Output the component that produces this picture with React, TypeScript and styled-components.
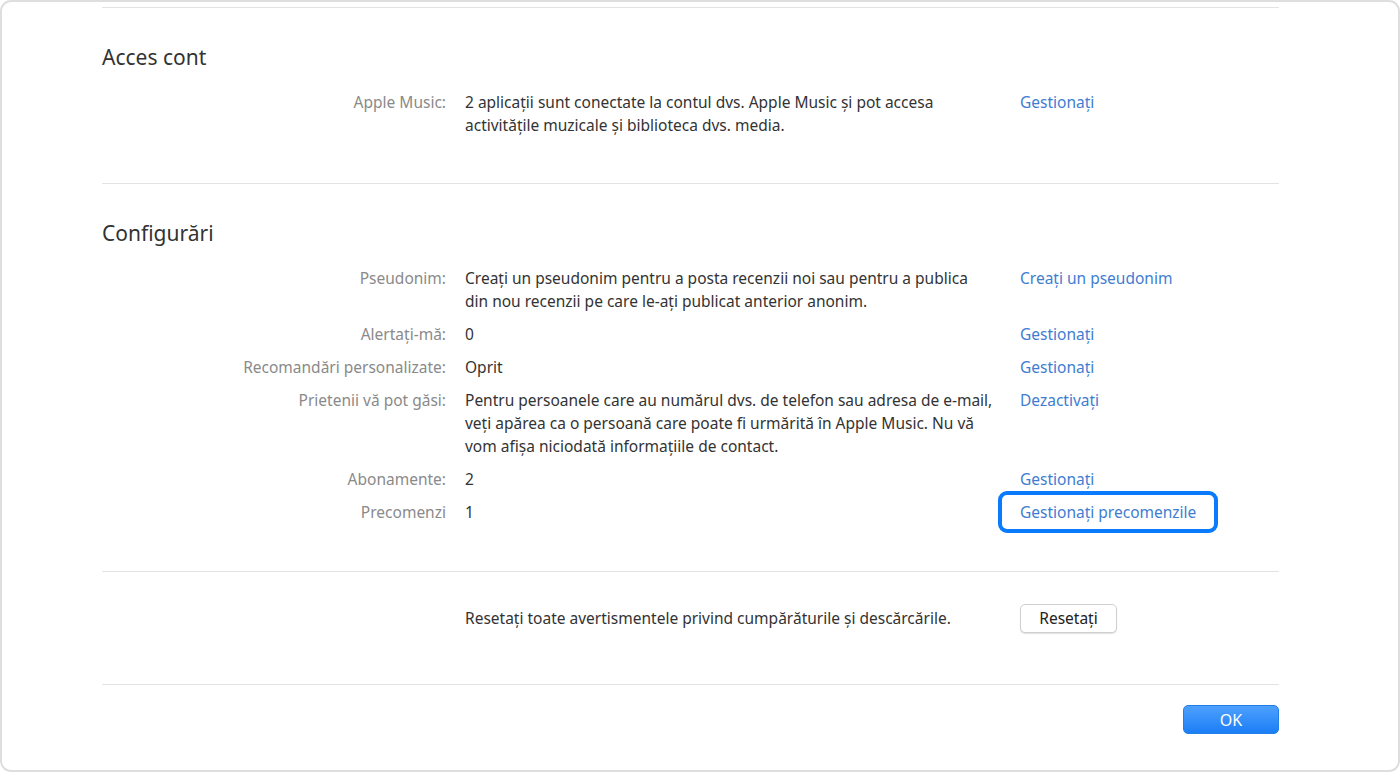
import React from "react";
import styled, { createGlobalStyle } from "styled-components";

const GlobalStyle = createGlobalStyle`
  html, body { margin: 0; padding: 0; background: #ffffff; }
  body { font-family: "Noto Sans", "Open Sans", sans-serif; -webkit-font-smoothing: antialiased; }
  * { box-sizing: border-box; }
`;

const Frame = styled.div`
  width: 1400px;
  height: 772px;
  border: 2px solid #dedede;
  border-radius: 11px;
  background: #fff;
  padding: 5px 119px 0 100px;
  overflow: hidden;
`;

const Section = styled.section<{ $pt: number; $pb: number }>`
  border-top: 1px solid #e3e3e3;
  padding-top: ${(p) => p.$pt}px;
  padding-bottom: ${(p) => p.$pb}px;
`;

const Heading = styled.h2`
  margin: 0 0 19px 0;
  font-size: 21px;
  line-height: 28px;
  font-weight: 400;
  color: #333;
`;

const Rows = styled.div`
  display: flex;
  flex-direction: column;
  gap: 10px;
  padding-top: 1px;
`;

const Row = styled.div`
  display: grid;
  grid-template-columns: 344px 536px auto;
  column-gap: 19px;
  font-size: 15.5px;
  line-height: 23px;
`;

const Label = styled.div`
  text-align: right;
  color: #8a8a8a;
  white-space: nowrap;
`;

const Value = styled.div`
  color: #333;
  max-width: 528px;
`;

const Action = styled.div`
  color: #3f7dd0;
`;

const LinkText = styled.span`
  position: relative;
  cursor: pointer;
`;

const Highlight = styled.span`
  position: absolute;
  top: -10px;
  bottom: -10px;
  left: -22px;
  right: -22px;
  border: 4px solid #0b7bfd;
  border-radius: 9px;
  pointer-events: none;
`;

const ResetRow = styled.div`
  display: grid;
  grid-template-columns: 344px 536px auto;
  column-gap: 19px;
  align-items: center;
  font-size: 15.5px;
  line-height: 23px;
`;

const GrayButton = styled.button`
  justify-self: start;
  width: 97px;
  height: 29px;
  border: 1px solid #cfcfcf;
  border-radius: 5px;
  background: #fff;
  box-shadow: 0 1px 1px rgba(0, 0, 0, 0.12);
  font-family: inherit;
  font-size: 15.5px;
  color: #222;
  padding: 0 0 1px 0;
`;

const Footer = styled.div`
  display: flex;
  justify-content: flex-end;
  padding-top: 20px;
`;

const OkButton = styled.button`
  width: 96px;
  height: 29px;
  border: 1px solid #237fe8;
  border-radius: 5px;
  background: linear-gradient(#4ea0fe, #1b7ef5);
  color: #fff;
  font-family: inherit;
  font-size: 16px;
  padding: 0;
`;

type Item = { label: string; value: string; action: string; highlight?: boolean };

const configItems: Item[] = [
  {
    label: "Pseudonim:",
    value: "Creați un pseudonim pentru a posta recenzii noi sau pentru a publica din nou recenzii pe care le-ați publicat anterior anonim.",
    action: "Creați un pseudonim",
  },
  { label: "Alertați-mă:", value: "0", action: "Gestionați" },
  { label: "Recomandări personalizate:", value: "Oprit", action: "Gestionați" },
  {
    label: "Prietenii vă pot găsi:",
    value: "Pentru persoanele care au numărul dvs. de telefon sau adresa de e-mail, veți apărea ca o persoană care poate fi urmărită în Apple Music. Nu vă vom afișa niciodată informațiile de contact.",
    action: "Dezactivați",
  },
  { label: "Abonamente:", value: "2", action: "Gestionați" },
  { label: "Precomenzi", value: "1", action: "Gestionați precomenzile", highlight: true },
];

function InfoRow({ item }: { item: Item }) {
  return (
    <Row>
      <Label>{item.label}</Label>
      <Value>{item.value}</Value>
      <Action>
        <LinkText>
          {item.action}
          {item.highlight && <Highlight />}
        </LinkText>
      </Action>
    </Row>
  );
}

export default function App() {
  return (
    <>
      <GlobalStyle />
      <Frame>
        <Section $pt={35} $pb={46}>
          <Heading>Acces cont</Heading>
          <Rows>
            <InfoRow
              item={{
                label: "Apple Music:",
                value: "2 aplicații sunt conectate la contul dvs. Apple Music și pot accesa activitățile muzicale și biblioteca dvs. media.",
                action: "Gestionați",
              }}
            />
          </Rows>
        </Section>
        <Section $pt={35} $pb={47}>
          <Heading>Configurări</Heading>
          <Rows>
            {configItems.map((it) => (
              <InfoRow key={it.label} item={it} />
            ))}
          </Rows>
        </Section>
        <Section $pt={32} $pb={51}>
          <ResetRow>
            <span />
            <Value>Resetați toate avertismentele privind cumpărăturile și descărcările.</Value>
            <GrayButton>Resetați</GrayButton>
          </ResetRow>
        </Section>
        <Section $pt={0} $pb={0}>
          <Footer>
            <OkButton>OK</OkButton>
          </Footer>
        </Section>
      </Frame>
    </>
  );
}
